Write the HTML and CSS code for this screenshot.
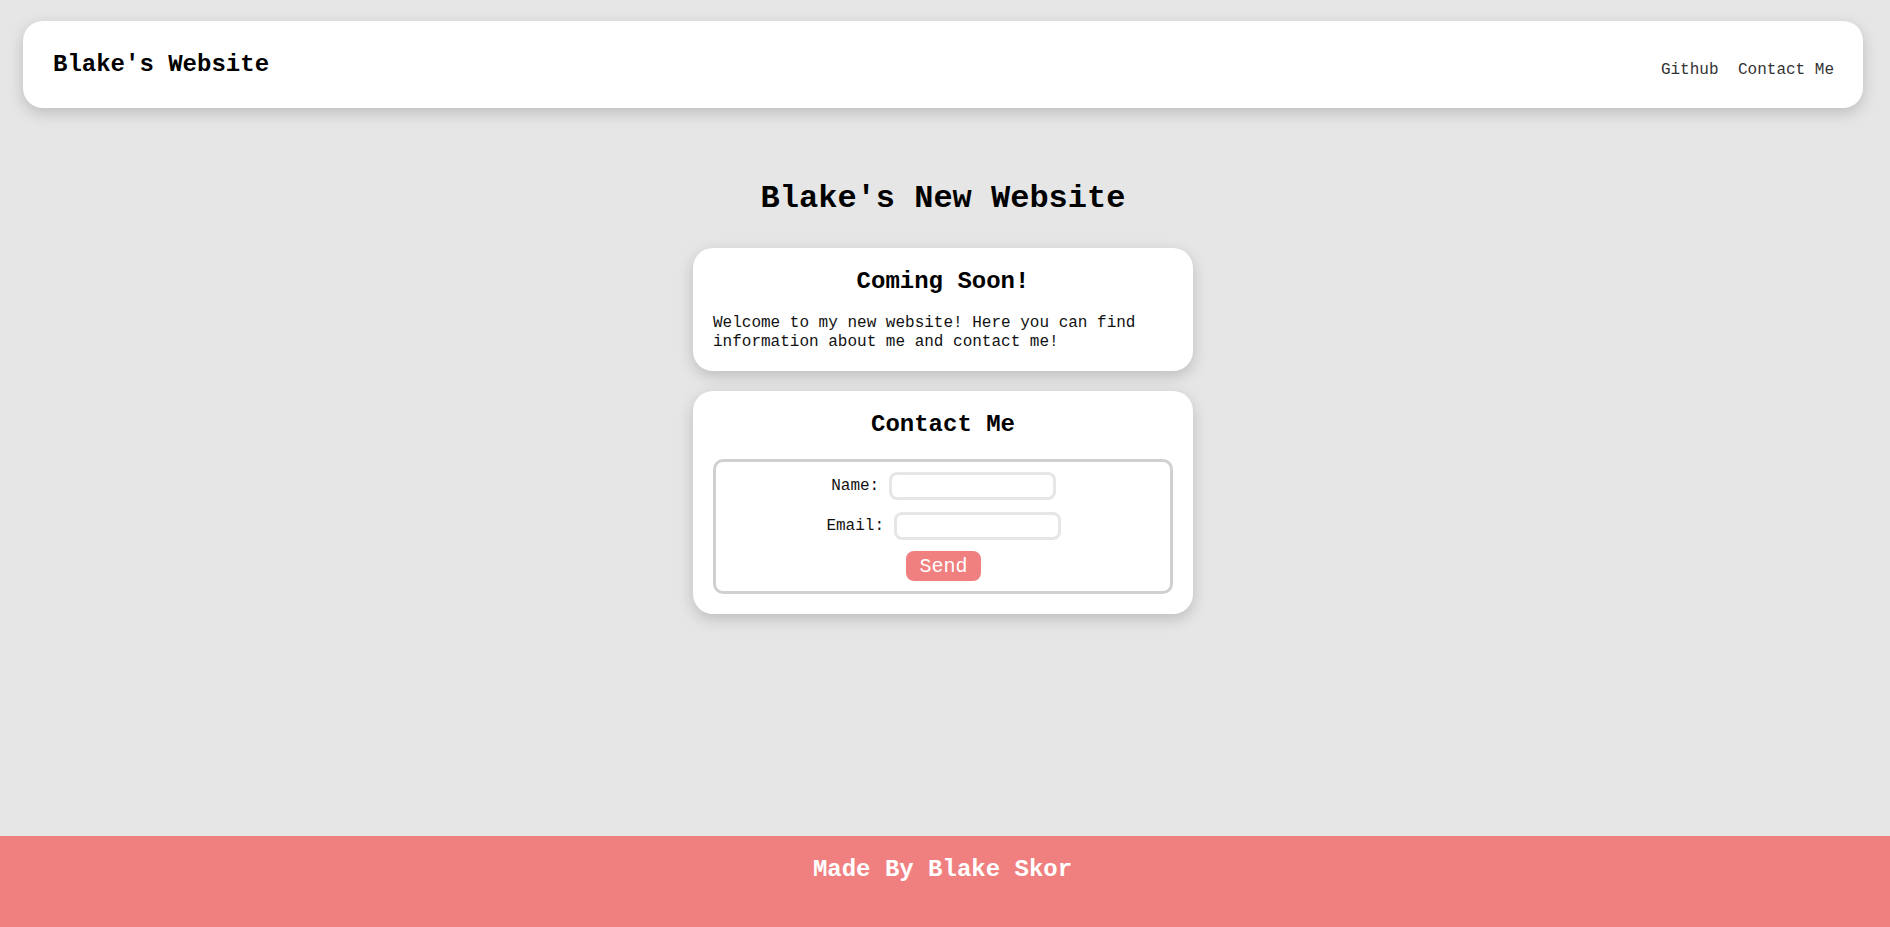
FILE: index.html
```html
<!DOCTYPE html>
<html lang="en">
<head>
<meta charset="utf-8">
<title>Blake's Website</title>
<link rel="stylesheet" href="styles.css">
</head>
<body>
<div class="page">
  <header class="site-header">
    <div class="brand">Blake's Website</div>
    <nav class="nav">
      <a href="#" class="nav-link">Github</a>
      <a href="#" class="nav-link">Contact Me</a>
    </nav>
  </header>
  <main class="main">
    <h1 class="page-title">Blake's New Website</h1>
    <section class="card">
      <h2 class="card-title">Coming Soon!</h2>
      <p class="card-text">Welcome to my new website! Here you can find information about me and contact me!</p>
    </section>
    <section class="card">
      <h2 class="card-title">Contact Me</h2>
      <form class="form-box">
        <div class="form-row"><label class="form-label">Name:</label><input class="form-input" type="text"></div>
        <div class="form-row"><label class="form-label">Email:</label><input class="form-input" type="text"></div>
        <div class="form-row"><button type="button" class="send-btn">Send</button></div>
      </form>
    </section>
  </main>
</div>
<footer class="site-footer">
  <div class="footer-text">Made By Blake Skor</div>
</footer>
</body>
</html>
```

FILE: styles.css
```css
html, body {
  margin: 0;
  padding: 0;
}
body {
  background: #e6e6e6;
  font-family: "Liberation Mono", "Courier New", monospace;
  color: #000;
  min-height: 100vh;
  display: flex;
  flex-direction: column;
}
.page {
  padding-right: 4px;
  flex: 1;
}
.site-header {
  margin: 21px 23px 0 23px;
  height: 87px;
  background: #fff;
  border-radius: 20px;
  box-shadow: 0 5px 15px rgba(0, 0, 0, 0.18);
  display: flex;
  align-items: center;
  justify-content: space-between;
  padding: 0 29px 0 30px;
  box-sizing: border-box;
}
.brand {
  font-size: 24px;
  line-height: 27px;
  font-weight: bold;
}
.nav {
  display: flex;
  gap: 19.5px;
  padding-top: 11px;
}
.nav-link {
  font-size: 16px;
  color: #333;
  text-decoration: none;
}
.main {
  display: flex;
  flex-direction: column;
  align-items: center;
}
.page-title {
  font-size: 32px;
  font-weight: bold;
  margin: 73px 0 31px 0;
  line-height: 36px;
}
.card {
  width: 500px;
  box-sizing: border-box;
  background: #fff;
  border-radius: 20px;
  box-shadow: 0 5px 15px rgba(0, 0, 0, 0.18);
  padding: 20px;
  margin-bottom: 20px;
}
.card-title {
  font-size: 24px;
  font-weight: bold;
  text-align: center;
  margin: 0;
  line-height: 27px;
}
.card-text {
  font-size: 16px;
  line-height: 18.5px;
  margin: 19px 0 0 0;
  color: #111;
}
.form-box {
  margin-top: 21px;
  border: 3px solid #d0d0d0;
  border-radius: 10px;
  padding: 10px 10px 10px 10px;
  display: flex;
  flex-direction: column;
  align-items: center;
  gap: 12px;
}
.form-row {
  display: flex;
  align-items: center;
  justify-content: center;
  padding-left: 1px;
}
.form-row + .form-row + .form-row {
  margin-top: -1px;
}
.form-label {
  font-size: 16px;
  margin-right: 9.6px;
  color: #111;
}
.form-input {
  width: 167px;
  height: 28px;
  box-sizing: border-box;
  border: 3px solid #e6e6e6;
  border-radius: 8px;
  outline: none;
  background: #fff;
  padding: 0 6px;
  font-family: "Liberation Mono", monospace;
}
.send-btn {
  width: 75px;
  height: 30px;
  border: none;
  border-radius: 8px;
  background: #f08080;
  color: #fff;
  font-family: "Liberation Mono", "Courier New", monospace;
  font-size: 20px;
  padding: 0;
}
.site-footer {
  height: 91px;
  background: #f08080;
  padding-right: 5px;
  box-sizing: border-box;
}
.footer-text {
  color: #fff;
  font-size: 24px;
  font-weight: bold;
  text-align: center;
  line-height: 27px;
  padding-top: 20px;
}
```
